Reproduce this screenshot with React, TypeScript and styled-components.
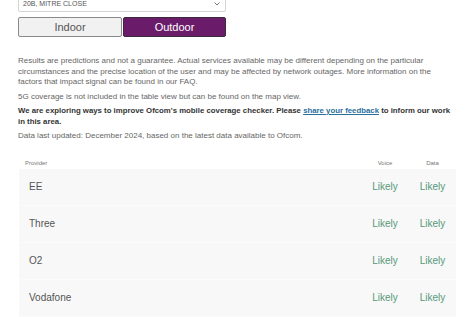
import styled, { createGlobalStyle } from "styled-components";

const GlobalStyle = createGlobalStyle`
  html, body {
    margin: 0;
    padding: 0;
    background: #ffffff;
    font-family: "Liberation Sans", Arial, sans-serif;
  }
`;

const Page = styled.div`
  width: 476px;
  height: 317px;
  overflow: hidden;
  padding: 0 20px 0 18px;
  box-sizing: border-box;
`;

const Controls = styled.div`
  width: 208px;
  margin-top: -5px;
  display: flex;
  flex-direction: column;
  gap: 5px;
`;

const Select = styled.div`
  height: 17px;
  box-sizing: border-box;
  border: 1px solid #d4d4d4;
  border-radius: 2px;
  padding: 0 5px 0 4px;
  display: flex;
  align-items: center;
  justify-content: space-between;
  font-size: 7px;
  color: #555;
  text-transform: uppercase;
`;

const Toggle = styled.div`
  display: grid;
  grid-template-columns: 104px 103px;
  gap: 1px;
`;

const ToggleButton = styled.div<{ $active?: boolean }>`
  height: 20px;
  box-sizing: border-box;
  border: 1px solid ${(p) => (p.$active ? "#3c2a3c" : "#8a8a8a")};
  border-radius: 2px;
  background: ${(p) => (p.$active ? "#6a1c6b" : "#f1f1f1")};
  color: ${(p) => (p.$active ? "#ffffff" : "#555")};
  font-size: 11px;
  display: flex;
  align-items: center;
  justify-content: center;
`;

const Notes = styled.div`
  margin-top: 19px;
  font-size: 8px;
  line-height: 10.5px;
  color: #666;
`;

const Note = styled.p<{ $strong?: boolean }>`
  margin: 0 0 4px;
  font-size: ${(p) => (p.$strong ? "7.8px" : "8px")};
  font-weight: ${(p) => (p.$strong ? 700 : 400)};
  color: ${(p) => (p.$strong ? "#333" : "#666")};
`;

const Link = styled.a`
  color: #2a6f9b;
  text-decoration: underline;
`;

const Table = styled.div`
  margin-top: 15px;
  margin-left: 1px;
  display: flex;
  flex-direction: column;
`;

const Columns = styled.div`
  display: grid;
  grid-template-columns: 1fr 48px 47px;
  align-items: center;
`;

const HeadRow = styled(Columns)`
  height: 12px;
  padding-left: 6px;
  font-size: 6px;
  color: #777;
`;

const Row = styled(Columns)`
  height: 37px;
  padding-left: 10px;
  background: #f8f8f8;
  border-bottom: 1px solid #fbfbfb;
  box-sizing: border-box;
  font-size: 10px;
  color: #555;
`;

const Cell = styled.div`
  text-align: center;
`;

const Likely = styled(Cell)`
  color: #569878;
  font-size: 10px;
`;

function Chevron() {
  return (
    <svg width="6" height="4" viewBox="0 0 6 4">
      <path d="M0.5 0.5 L3 3 L5.5 0.5" fill="none" stroke="#666" strokeWidth="0.9" />
    </svg>
  );
}

const providers = ["EE", "Three", "O2", "Vodafone"];

function App() {
  return (
    <Page>
      <GlobalStyle />
      <Controls>
        <Select>
          <span>20B, Mitre Close</span>
          <Chevron />
        </Select>
        <Toggle>
          <ToggleButton>Indoor</ToggleButton>
          <ToggleButton $active>Outdoor</ToggleButton>
        </Toggle>
      </Controls>
      <Notes>
        <Note>
          Results are predictions and not a guarantee. Actual services available may be different depending on the
          particular circumstances and the precise location of the user and may be affected by network outages. More
          information on the factors that impact signal can be found in our FAQ.
        </Note>
        <Note>5G coverage is not included in the table view but can be found on the map view.</Note>
        <Note $strong>
          We are exploring ways to improve Ofcom's mobile coverage checker. Please{" "}
          <Link href="#">share your feedback</Link> to inform our work in this area.
        </Note>
        <Note>Data last updated: December 2024, based on the latest data available to Ofcom.</Note>
      </Notes>
      <Table>
        <HeadRow>
          <div>Provider</div>
          <Cell>Voice</Cell>
          <Cell>Data</Cell>
        </HeadRow>
        {providers.map((name) => (
          <Row key={name}>
            <div>{name}</div>
            <Likely>Likely</Likely>
            <Likely>Likely</Likely>
          </Row>
        ))}
      </Table>
    </Page>
  );
}

export default App;
